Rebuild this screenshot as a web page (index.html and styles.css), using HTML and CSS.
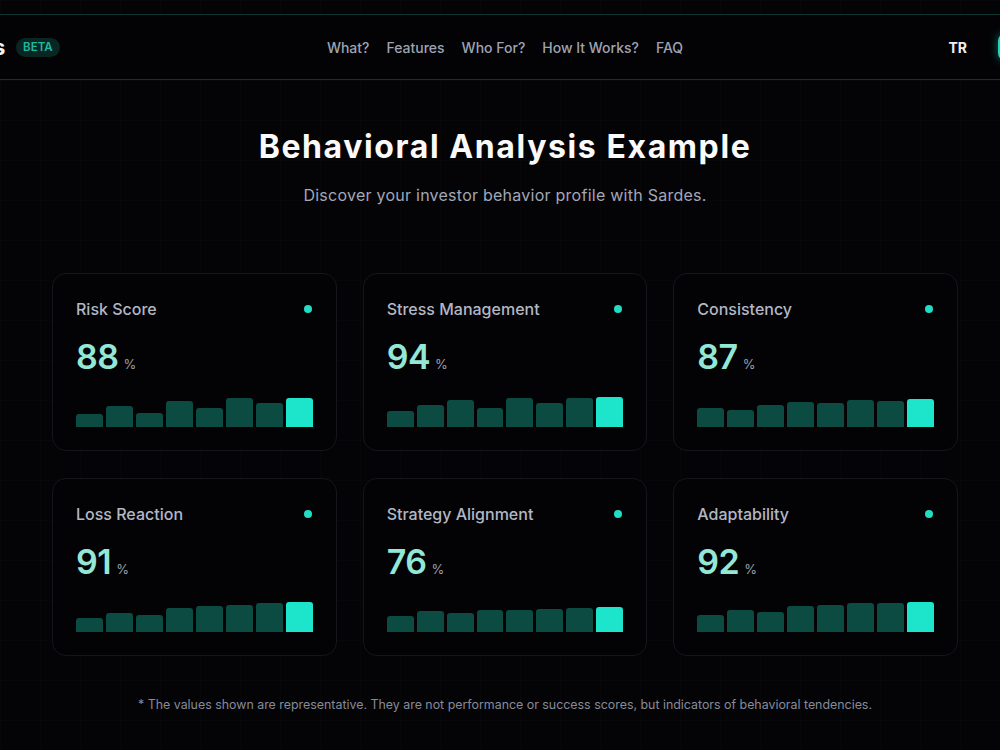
FILE: index.html
```html
<!DOCTYPE html>
<html lang="en">
<head>
<meta charset="utf-8">
<title>Behavioral Analysis Example</title>
<link rel="stylesheet" href="styles.css">
</head>
<body>
<header class="topbar">
  <div class="topbar-inner">
    <div class="brand">
      <span class="logo">Sardes</span>
      <span class="beta">BETA</span>
    </div>
    <nav class="nav">
      <a href="#">What?</a>
      <a href="#">Features</a>
      <a href="#">Who For?</a>
      <a href="#">How It Works?</a>
      <a href="#">FAQ</a>
    </nav>
    <div class="actions">
      <span class="lang">TR</span>
      <a class="cta" href="#">Start</a>
    </div>
  </div>
</header>

<main class="main">
  <h1 class="title">Behavioral Analysis Example</h1>
  <p class="subtitle">Discover your investor behavior profile with Sardes.</p>

  <section class="grid">
    <article class="card">
      <div class="card-head"><span class="card-title">Risk Score</span><span class="dot"></span></div>
      <div class="value"><span class="num">88</span><span class="pct">%</span></div>
      <div class="bars">
        <span class="bar" style="height:13px"></span><span class="bar" style="height:21px"></span><span class="bar" style="height:14px"></span><span class="bar" style="height:26px"></span><span class="bar" style="height:19px"></span><span class="bar" style="height:29px"></span><span class="bar" style="height:24px"></span><span class="bar bar-hi" style="height:29px"></span>
      </div>
    </article>
    <article class="card">
      <div class="card-head"><span class="card-title">Stress Management</span><span class="dot"></span></div>
      <div class="value"><span class="num">94</span><span class="pct">%</span></div>
      <div class="bars">
        <span class="bar" style="height:16px"></span><span class="bar" style="height:22px"></span><span class="bar" style="height:27px"></span><span class="bar" style="height:19px"></span><span class="bar" style="height:29px"></span><span class="bar" style="height:24px"></span><span class="bar" style="height:29px"></span><span class="bar bar-hi" style="height:30px"></span>
      </div>
    </article>
    <article class="card">
      <div class="card-head"><span class="card-title">Consistency</span><span class="dot"></span></div>
      <div class="value"><span class="num">87</span><span class="pct">%</span></div>
      <div class="bars">
        <span class="bar" style="height:19px"></span><span class="bar" style="height:17px"></span><span class="bar" style="height:22px"></span><span class="bar" style="height:25px"></span><span class="bar" style="height:24px"></span><span class="bar" style="height:27px"></span><span class="bar" style="height:26px"></span><span class="bar bar-hi" style="height:28px"></span>
      </div>
    </article>
    <article class="card">
      <div class="card-head"><span class="card-title">Loss Reaction</span><span class="dot"></span></div>
      <div class="value"><span class="num">91</span><span class="pct">%</span></div>
      <div class="bars">
        <span class="bar" style="height:14px"></span><span class="bar" style="height:19px"></span><span class="bar" style="height:17px"></span><span class="bar" style="height:24px"></span><span class="bar" style="height:26px"></span><span class="bar" style="height:27px"></span><span class="bar" style="height:29px"></span><span class="bar bar-hi" style="height:30px"></span>
      </div>
    </article>
    <article class="card">
      <div class="card-head"><span class="card-title">Strategy Alignment</span><span class="dot"></span></div>
      <div class="value"><span class="num">76</span><span class="pct">%</span></div>
      <div class="bars">
        <span class="bar" style="height:16px"></span><span class="bar" style="height:21px"></span><span class="bar" style="height:19px"></span><span class="bar" style="height:22px"></span><span class="bar" style="height:22px"></span><span class="bar" style="height:23px"></span><span class="bar" style="height:24px"></span><span class="bar bar-hi" style="height:25px"></span>
      </div>
    </article>
    <article class="card">
      <div class="card-head"><span class="card-title">Adaptability</span><span class="dot"></span></div>
      <div class="value"><span class="num">92</span><span class="pct">%</span></div>
      <div class="bars">
        <span class="bar" style="height:17px"></span><span class="bar" style="height:22px"></span><span class="bar" style="height:20px"></span><span class="bar" style="height:26px"></span><span class="bar" style="height:27px"></span><span class="bar" style="height:29px"></span><span class="bar" style="height:29px"></span><span class="bar bar-hi" style="height:30px"></span>
      </div>
    </article>
  </section>

  <p class="note">* The values shown are representative. They are not performance or success scores, but indicators of behavioral tendencies.</p>
</main>
</body>
</html>
```

FILE: styles.css
```css
html, body {
  margin: 0;
  padding: 0;
  overflow: hidden;
}
body {
  width: 1000px;
  height: 750px;
  background-color: #040407;
  background-image:
    linear-gradient(rgba(255,255,255,0.012) 1px, transparent 1px),
    linear-gradient(90deg, rgba(255,255,255,0.012) 1px, transparent 1px);
  background-size: 40px 40px;
  font-family: "Inter", "Noto Sans", sans-serif;
  color: #fff;
}

.topbar {
  margin-top: 14px;
  border-top: 1px solid #0d3633;
  border-bottom: 1px solid #0d3633;
  background: #030305;
  height: 64px;
}
.topbar-inner {
  width: 1146px;
  margin-left: -68px;
  height: 64px;
  display: grid;
  grid-template-columns: 1fr auto 1fr;
  align-items: center;
}
.brand {
  display: flex;
  align-items: center;
  gap: 11px;
}
.logo {
  font-size: 22px;
  font-weight: 700;
  color: #f2f2f2;
  letter-spacing: -0.3px;
}
.beta {
  background: #0a2622;
  color: #1db9a2;
  font-size: 11.5px;
  font-weight: 600;
  padding: 2px 7px;
  border-radius: 10px;
  line-height: 15px;
}
.nav {
  display: flex;
  gap: 17px;
}
.nav a {
  color: #9ea3b3;
  text-decoration: none;
  font-size: 14px;
  font-weight: 500;
}
.actions {
  display: flex;
  justify-content: flex-end;
  align-items: center;
  gap: 31px;
}
.lang {
  font-size: 14px;
  font-weight: 700;
  color: #f0f0f0;
}
.cta {
  width: 80px;
  height: 28px;
  box-sizing: border-box;
  border: 2px solid #1fd6bd;
  border-radius: 8px;
  background: #0b2f2b;
  box-shadow: 0 0 10px rgba(31,214,189,0.45);
  color: #e8fffa;
  font-size: 13px;
  font-weight: 600;
  text-decoration: none;
  display: flex;
  align-items: center;
  justify-content: center;
}

.main {
  width: 906px;
  margin-left: 52px;
  padding-top: 47px;
}
.title {
  margin: 0;
  text-align: center;
  font-size: 32px;
  line-height: 40px;
  font-weight: 700;
  color: #fafafa;
  letter-spacing: 1.6px;
}
.subtitle {
  margin: 16px 0 0;
  text-align: center;
  font-size: 16px;
  line-height: 24px;
  color: #a3a7b6;
  letter-spacing: 0.25px;
}

.grid {
  margin-top: 66px;
  display: grid;
  grid-template-columns: repeat(3, minmax(0, 1fr));
  column-gap: 26px;
  row-gap: 27px;
}
.card {
  box-sizing: border-box;
  height: 178px;
  padding: 23px 23px 23px 23px;
  border: 1px solid #14161b;
  border-radius: 14px;
  background: #030305;
  display: flex;
  flex-direction: column;
  min-width: 0;
}
.card-head {
  display: flex;
  justify-content: space-between;
  align-items: center;
  height: 24px;
}
.card-title {
  font-size: 16px;
  font-weight: 500;
  color: #b3b7c4;
}
.dot {
  width: 8px;
  height: 8px;
  border-radius: 50%;
  background: #22dcc3;
  margin-right: 1px;
}
.value {
  margin-top: 16px;
  height: 40px;
  display: flex;
  align-items: baseline;
  gap: 5px;
}
.num {
  font-size: 34px;
  line-height: 40px;
  font-weight: 600;
  color: #93e7d7;
  letter-spacing: -0.5px;
}
.pct {
  font-size: 13px;
  color: #9aa0ad;
}
.bars {
  margin-top: 20px;
  height: 30px;
  display: flex;
  align-items: flex-end;
  gap: 3px;
}
.bar {
  flex: 1 1 0;
  border-radius: 3px 3px 0 0;
  background: #0b4b42;
}
.bar-hi {
  background: #1de5cb;
}

.note {
  margin: 39px 0 0;
  text-align: center;
  font-size: 12.4px;
  line-height: 20px;
  color: #878b98;
}
```
